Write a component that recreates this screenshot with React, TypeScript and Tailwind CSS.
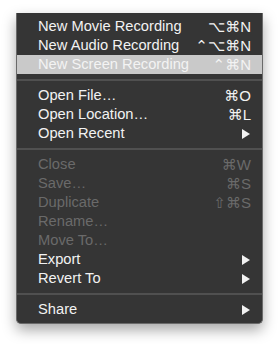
import React from 'react';

type Item = {
  label: string;
  shortcut?: string;
  disabled?: boolean;
  highlighted?: boolean;
  submenu?: boolean;
};

const sections: Item[][] = [
  [
    { label: 'New Movie Recording', shortcut: '⌥⌘N' },
    { label: 'New Audio Recording', shortcut: '⌃⌥⌘N' },
    { label: 'New Screen Recording', shortcut: '⌃⌘N', highlighted: true }
  ],
  [
    { label: 'Open File…', shortcut: '⌘O' },
    { label: 'Open Location…', shortcut: '⌘L' },
    { label: 'Open Recent', submenu: true }
  ],
  [
    { label: 'Close', shortcut: '⌘W', disabled: true },
    { label: 'Save…', shortcut: '⌘S', disabled: true },
    { label: 'Duplicate', shortcut: '⇧⌘S', disabled: true },
    { label: 'Rename…', disabled: true },
    { label: 'Move To…', disabled: true },
    { label: 'Export', submenu: true },
    { label: 'Revert To', submenu: true }
  ],
  [{ label: 'Share', submenu: true }]
];

const Arrow = () => (
  <svg width="8" height="10" viewBox="0 0 8 10" className="mr-[1px]">
    <path d="M0 0 L8 5 L0 10 Z" fill="#f2f2f2" />
  </svg>
);

const MenuRow = ({ item }: { item: Item }) => {
  const color = item.highlighted
    ? 'bg-[#c9c9c9] text-[#f3f3f3]'
    : item.disabled
      ? 'text-[#6a6a6a]'
      : 'text-[#f2f2f2]';
  return (
    <div className={`h-[19px] flex items-center justify-between pl-[21px] pr-[11px] ${color}`}>
      <span className="leading-none">{item.label}</span>
      {item.shortcut && <span className="leading-none text-[15px]">{item.shortcut}</span>}
      {item.submenu && <Arrow />}
    </div>
  );
};

const App = () => {
  return (
    <div className="min-h-screen bg-white pt-[13px] pl-[16px]" style={{ fontFamily: '"Liberation Sans", "DejaVu Sans", sans-serif' }}>
      <div className="w-[247px] bg-[#353535] rounded-b-[5px] border border-t-0 border-[#6a6a6a] py-[4px] text-[14.7px] shadow-[0_6px_14px_rgba(0,0,0,0.35)]">
        {sections.map((section, i) => (
          <div key={i}>
            {i > 0 && (
              <div className="h-[12px] flex items-center">
                <div className="w-full h-[2px] bg-[#505050]" />
              </div>
            )}
            {section.map(item => (
              <MenuRow key={item.label} item={item} />
            ))}
          </div>
        ))}
      </div>
    </div>
  );
};

export default App;
